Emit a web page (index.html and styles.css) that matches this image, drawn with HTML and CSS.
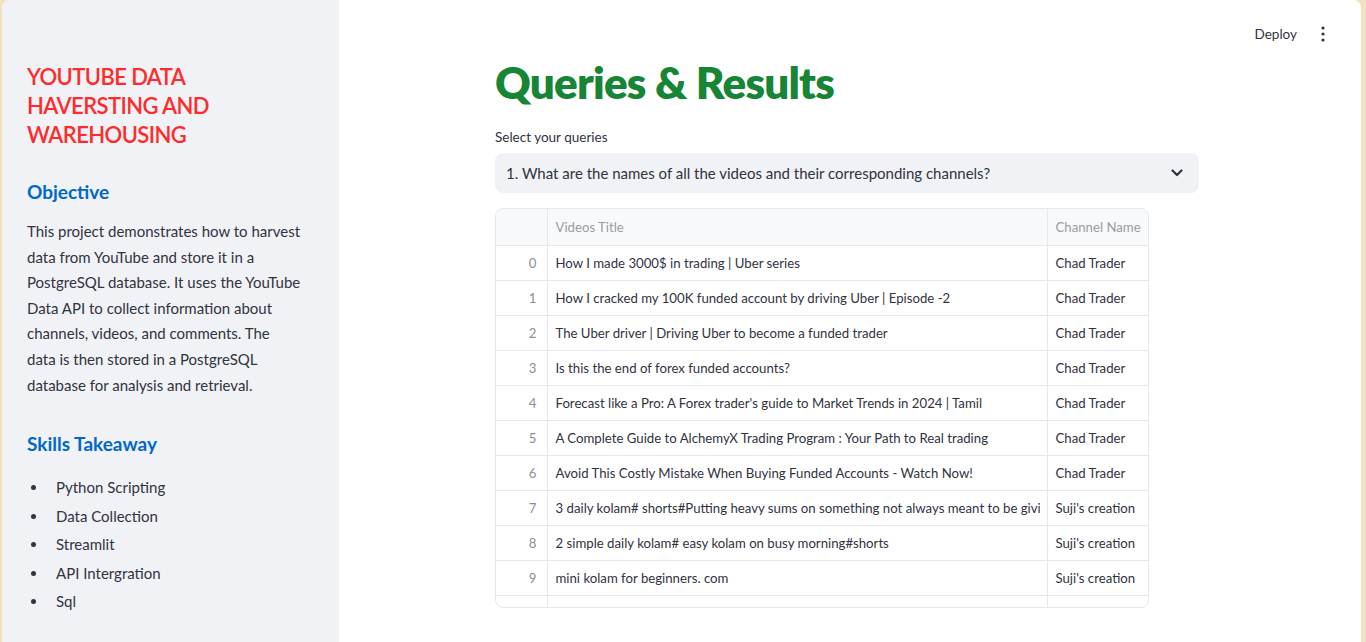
FILE: index.html
```html
<!DOCTYPE html>
<html>
<head>
<meta charset="utf-8">
<link rel="stylesheet" href="styles.css">
</head>
<body>
<div class="app">
  <aside class="sidebar">
    <h2 class="brand">YOUTUBE DATA<br>HAVERSTING AND<br>WAREHOUSING</h2>
    <h3 class="sec">Objective</h3>
    <p class="desc">This project demonstrates how to harvest<br>data from YouTube and store it in a<br>PostgreSQL database. It uses the YouTube<br>Data API to collect information about<br>channels, videos, and comments. The<br>data is then stored in a PostgreSQL<br>database for analysis and retrieval.</p>
    <h3 class="sec sec2">Skills Takeaway</h3>
    <ul class="skills">
      <li>Python Scripting</li>
      <li>Data Collection</li>
      <li>Streamlit</li>
      <li>API Intergration</li>
      <li>Sql</li>
    </ul>
  </aside>
  <main class="main">
    <header class="topbar">
      <span class="deploy">Deploy</span>
      <span class="kebab"><svg width="4" height="16" viewBox="0 0 4 16"><circle cx="2" cy="2" r="1.6" fill="#31333f"/><circle cx="2" cy="8" r="1.6" fill="#31333f"/><circle cx="2" cy="14" r="1.6" fill="#31333f"/></svg></span>
    </header>
    <section class="content">
      <h1 class="title">Queries &amp; Results</h1>
      <div class="label">Select your queries</div>
      <div class="select">
        <span>1. What are the names of all the videos and their corresponding channels?</span>
        <svg class="chev" width="12" height="8" viewBox="0 0 12 8"><path d="M1.5 1.5 L6 6 L10.5 1.5" fill="none" stroke="#31333f" stroke-width="2.2" stroke-linecap="round" stroke-linejoin="round"/></svg>
      </div>
      <div class="grid">
        <table>
          <thead>
            <tr><th class="idx"></th><th class="c1">Videos Title</th><th class="c2">Channel Name</th></tr>
          </thead>
          <tbody>
            <tr><td class="idx">0</td><td class="c1">How I made 3000$ in trading | Uber series</td><td class="c2">Chad Trader</td></tr>
            <tr><td class="idx">1</td><td class="c1">How I cracked my 100K funded account by driving Uber | Episode -2</td><td class="c2">Chad Trader</td></tr>
            <tr><td class="idx">2</td><td class="c1">The Uber driver | Driving Uber to become a funded trader</td><td class="c2">Chad Trader</td></tr>
            <tr><td class="idx">3</td><td class="c1">Is this the end of forex funded accounts?</td><td class="c2">Chad Trader</td></tr>
            <tr><td class="idx">4</td><td class="c1">Forecast like a Pro: A Forex trader's guide to Market Trends in 2024 | Tamil</td><td class="c2">Chad Trader</td></tr>
            <tr><td class="idx">5</td><td class="c1">A Complete Guide to AlchemyX Trading Program : Your Path to Real trading</td><td class="c2">Chad Trader</td></tr>
            <tr><td class="idx">6</td><td class="c1">Avoid This Costly Mistake When Buying Funded Accounts - Watch Now!</td><td class="c2">Chad Trader</td></tr>
            <tr><td class="idx">7</td><td class="c1"><span class="clip">3 daily kolam# shorts#Putting heavy sums on something not always meant to be giving results</span></td><td class="c2">Suji's creation</td></tr>
            <tr><td class="idx">8</td><td class="c1">2 simple daily kolam# easy kolam on busy morning#shorts</td><td class="c2">Suji's creation</td></tr>
            <tr><td class="idx">9</td><td class="c1">mini kolam for beginners. com</td><td class="c2">Suji's creation</td></tr>
            <tr><td class="idx"></td><td class="c1"></td><td class="c2"></td></tr>
          </tbody>
        </table>
      </div>
    </section>
  </main>
</div>
</body>
</html>
```

FILE: styles.css
```css
* { box-sizing: border-box; }
html, body { margin: 0; padding: 0; height: 100%; }
body {
  background: #f3e2bd;
  font-family: "Lato", "Noto Sans", sans-serif;
  color: #31333f;
  overflow: hidden;
}
.app {
  display: flex;
  height: 642px;
  margin: 0 5px 0 2px;
  border-radius: 8px 8px 0 0;
  overflow: hidden;
  background: #ffffff;
}
.sidebar {
  width: 337px;
  flex: none;
  background: #f0f2f6;
  padding: 62px 20px 0 25px;
}
.brand {
  margin: 0;
  color: #ff2b2b;
  font-size: 22px;
  font-weight: 600;
  line-height: 29px;
  letter-spacing: -0.6px;
}
.sec {
  margin: 0;
  color: #0068c9;
  font-size: 19px;
  font-weight: 700;
  line-height: 24px;
}
.brand + .sec { margin-top: 31px; }
.desc {
  margin: 15px 0 0;
  font-size: 15px;
  line-height: 25.6px;
  white-space: nowrap;
}
.sec2 { margin-top: 34px; }
.skills {
  list-style: none;
  margin: 19px 0 0;
  padding: 0;
  font-size: 15px;
  line-height: 25.6px;
}
.skills li {
  display: flex;
  align-items: center;
  margin-bottom: 2.9px;
}
.skills li::before {
  content: "";
  width: 5px;
  height: 5px;
  border-radius: 50%;
  background: #31333f;
  margin: 0 20px 0 4px;
  flex: none;
}
.main {
  flex: 1;
  display: flex;
  flex-direction: column;
  min-width: 0;
}
.topbar {
  height: 56px;
  display: flex;
  align-items: center;
  justify-content: flex-end;
  padding: 11px 36px 0 0;
  gap: 24px;
}
.deploy {
  font-size: 13.5px;
}
.kebab { display: flex; align-items: center; }
.content {
  width: 704px;
  margin-left: 156px;
}
.title {
  margin: 0;
  color: #168535;
  font-size: 44px;
  font-weight: 800;
  line-height: 52px;
  letter-spacing: -0.8px;
}
.label {
  margin-top: 19px;
  font-size: 13.5px;
  line-height: 20px;
}
.select {
  margin-top: 6px;
  height: 40px;
  background: #f0f2f6;
  border-radius: 8px;
  display: flex;
  align-items: center;
  justify-content: space-between;
  padding: 0 16px 0 11px;
  font-size: 15px;
}
.grid {
  margin-top: 15px;
  width: 654px;
  height: 400px;
  border: 1px solid #e6e8ec;
  border-radius: 8px;
  overflow: hidden;
}
table {
  border-collapse: collapse;
  table-layout: fixed;
  width: 653px;
  font-size: 13.2px;
}
th, td {
  border-right: 1px solid #e6e8ec;
  border-bottom: 1px solid #e6e8ec;
  padding: 0 8px;
  white-space: nowrap;
  overflow: hidden;
  text-overflow: clip;
  text-align: left;
}
th {
  height: 36px;
  background: #f8f9fb;
  font-weight: 400;
  color: #9a9ca4;
}
td { height: 35px; }
th.c2, td.c2 { border-right: none; }
.idx { width: 51px; text-align: right; color: #8c8f98; padding-right: 10px; }
.c1 { width: 500px; }
.c2 { width: 102px; }
.clip {
  display: block;
  width: 484px;
  overflow: hidden;
  white-space: nowrap;
}
```
